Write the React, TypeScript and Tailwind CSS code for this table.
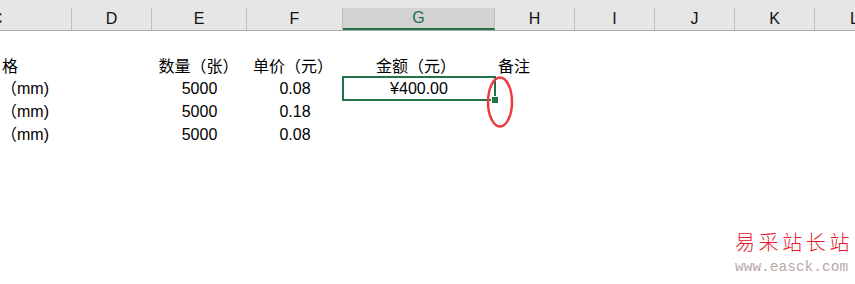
const font = "font-['Liberation_Sans','Noto_Sans_CJK_SC',sans-serif]";

const columns = [
  { key: 'C', w: 'w-[150px] -ml-[78px]' },
  { key: 'D', w: 'w-[80px]' },
  { key: 'E', w: 'w-[95px]' },
  { key: 'F', w: 'w-[96px]' },
  { key: 'G', w: 'w-[152px]' },
  { key: 'H', w: 'w-[80px]' },
  { key: 'I', w: 'w-[80px]' },
  { key: 'J', w: 'w-[80px]' },
  { key: 'K', w: 'w-[80px]' },
  { key: 'L', w: 'w-[80px]' },
];

const rows = [
  { c: '（mm)', e: '5000', f: '0.08', g: '¥400.00', h: 'h-[22px]' },
  { c: '（mm)', e: '5000', f: '0.18', g: '', h: 'h-[23px]' },
  { c: '（mm)', e: '5000', f: '0.08', g: '', h: 'h-[23px]' },
];

function HeaderRow() {
  return (
    <div className="flex h-[23px] border-b border-[#ababab] bg-[#e6e6e6]">
      {columns.map((col) => {
        const selected = col.key === 'G';
        return (
          <div
            key={col.key}
            className={`${col.w} shrink-0 flex items-center justify-center border-r border-[#bdbdbd] text-[16px] leading-none ${
              selected ? 'bg-[#d2d2d2] text-[#217346] border-b-2 border-b-[#217346]' : 'text-[#111]'
            }`}
          >
            {col.key}
          </div>
        );
      })}
    </div>
  );
}

export default function App() {
  return (
    <div className={`relative w-[855px] h-[284px] overflow-hidden bg-white text-black ${font}`}>
      <div className="h-[8px] bg-[#e6e6e6]" />
      <HeaderRow />

      <div className="h-[25px]" />

      {/* titles */}
      <div className="flex h-[22px] items-center text-[16px] leading-none">
        <div className="w-[72px] shrink-0 pl-[2px]">格</div>
        <div className="w-[80px] shrink-0" />
        <div className="w-[95px] shrink-0 text-center pr-[2px]">数量（张）</div>
        <div className="w-[96px] shrink-0 text-center pr-[4px]">单价（元）</div>
        <div className="w-[152px] shrink-0 text-center pr-[6px]">金额（元）</div>
        <div className="w-[80px] shrink-0 pl-[3px]">备注</div>
      </div>

      {rows.map((r, i) => (
        <div key={i} className={`flex ${r.h} items-center text-[16px] leading-none`}>
          <div className="w-[72px] shrink-0 pl-[1px]">{r.c}</div>
          <div className="w-[80px] shrink-0" />
          <div className="w-[95px] shrink-0 text-center">{r.e}</div>
          <div className="w-[96px] shrink-0 text-center">{r.f}</div>
          <div className="relative w-[152px] h-full shrink-0 flex items-center justify-center">
            {r.g}
            {i === 0 && (
              <>
                <div className="absolute -left-[1px] -top-[2px] -right-[1px] -bottom-[1px] border-2 border-[#217346]" />
                <div className="absolute -right-[3px] -bottom-[3px] w-[6px] h-[6px] bg-[#217346] outline outline-1 outline-white" />
              </>
            )}
          </div>
        </div>
      ))}

      {/* red annotation ellipse */}
      <svg className="absolute left-[485px] top-[75px]" width="30" height="54" viewBox="0 0 30 54">
        <ellipse cx="15" cy="27" rx="12" ry="24.5" fill="none" stroke="#ef3b3f" strokeWidth="2.5" />
      </svg>

      {/* watermark */}
      <div className="absolute left-[735px] top-[229px] flex flex-col">
        <div className="text-[20px] leading-[26px] tracking-[3.6px] text-[#e8142c] font-['Noto_Sans_CJK_SC',sans-serif] font-light">
          易采站长站
        </div>
        <div className="mt-[4px] text-[14.5px] leading-[16px] text-[#b8a8a8] font-['Liberation_Mono',monospace]">
          www.easck.com
        </div>
      </div>
    </div>
  );
}
